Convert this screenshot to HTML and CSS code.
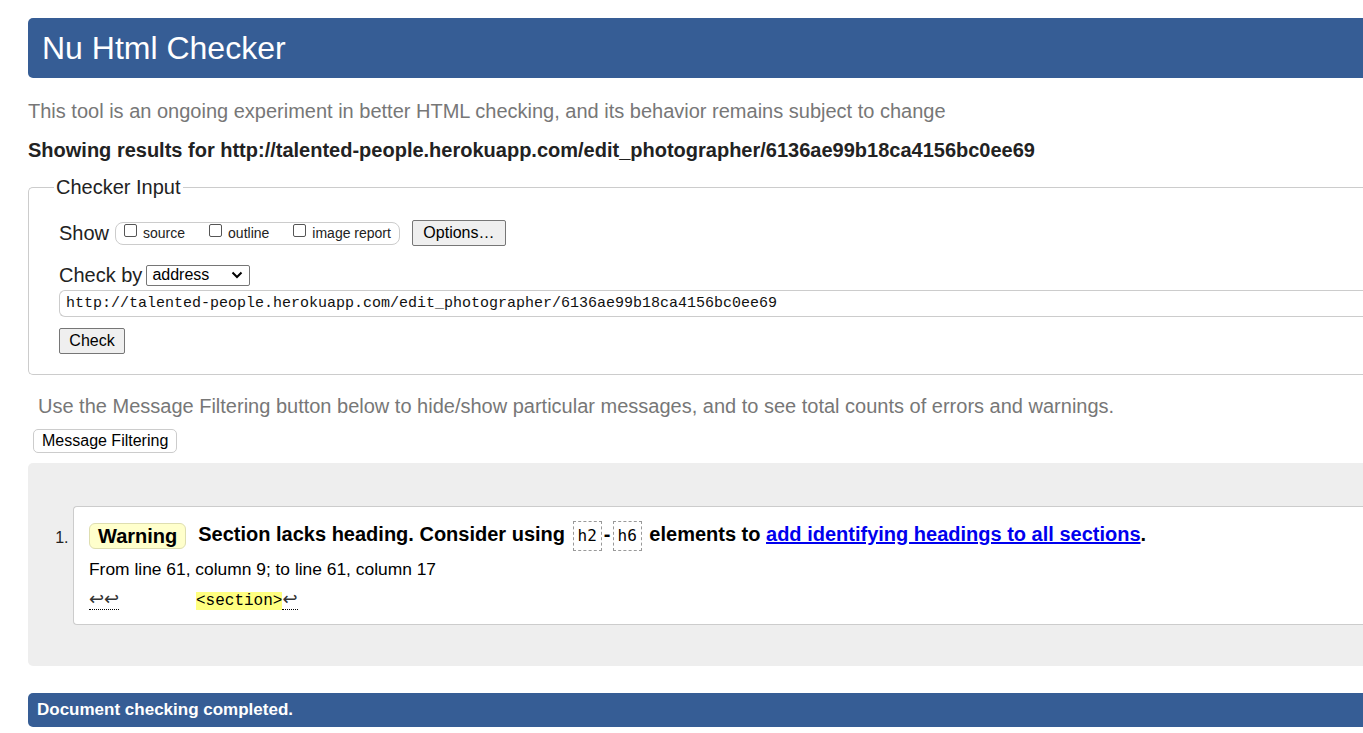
FILE: index.html
```html
<!DOCTYPE html>
<html lang="en">
<head>
<meta charset="utf-8">
<title>Nu Html Checker</title>
<link rel="stylesheet" href="styles.css">
</head>
<body>
<div class="page">
  <h1 class="banner">Nu Html Checker</h1>
  <p class="intro">This tool is an ongoing experiment in better HTML checking, and its behavior remains subject to change</p>
  <h2 class="results">Showing results for http://talented-people.herokuapp.com/edit_photographer/6136ae99b18ca4156bc0ee69</h2>
  <fieldset class="input">
    <legend>Checker Input</legend>
    <div class="row show-row">
      <span class="label">Show</span>
      <span class="show-group">
        <label class="opt"><span class="cb"></span>source</label>
        <label class="opt"><span class="cb"></span>outline</label>
        <label class="opt"><span class="cb"></span>image report</label>
      </span>
      <span class="btn btn-options">Options…</span>
    </div>
    <div class="row by-row">
      <span class="label">Check by</span>
      <span class="select">address<svg class="chev" width="12" height="8" viewBox="0 0 12 8"><path d="M1.5 1.5 L6 6 L10.5 1.5" fill="none" stroke="#000" stroke-width="2"/></svg></span>
    </div>
    <div class="url">http://talented-people.herokuapp.com/edit_photographer/6136ae99b18ca4156bc0ee69</div>
    <span class="btn btn-check">Check</span>
  </fieldset>
  <p class="filter-note">Use the Message Filtering button below to hide/show particular messages, and to see total counts of errors and warnings.</p>
  <span class="btn-filter">Message Filtering</span>
  <div class="messages">
    <ol class="list">
      <li class="item">
        <p class="msg"><span class="badge">Warning</span><span class="msg-text">Section lacks heading. Consider using <code class="tag">h2</code>-<code class="tag">h6</code> elements to <a href="#">add identifying headings to all sections</a>.</span></p>
        <p class="loc">From line 61, column 9; to line 61, column 17</p>
        <p class="extract"><span class="lf">↩↩</span>        <b class="hl">&lt;section&gt;</b><span class="lf">↩</span></p>
      </li>
    </ol>
  </div>
  <p class="done">Document checking completed.</p>
</div>
</body>
</html>
```

FILE: styles.css
```css
html {
  overflow: hidden;
}
body {
  margin: 0;
  background: #fff;
  font-family: "Liberation Sans", Arial, sans-serif;
  color: #000;
}
.page {
  margin-left: 28px;
  width: 1400px;
  padding-top: 18px;
}
.banner {
  margin: 0;
  height: 60px;
  line-height: 60px;
  padding-left: 14px;
  background: #365d95;
  color: #fff;
  font-size: 32px;
  font-weight: normal;
  border-radius: 5px 0 0 5px;
}
.intro {
  margin: 21px 0 0;
  font-size: 20px;
  line-height: 24px;
  color: #777;
}
.results {
  margin: 15px 0 0;
  font-size: 20px;
  line-height: 24px;
  color: #222;
}
.input {
  margin: 13px 0 0;
  padding: 0 0 20px 30px;
  border: 1px solid #ccc;
  border-right: none;
  border-radius: 5px 0 0 5px;
}
.input legend {
  margin-left: -5px;
  padding: 0 2px;
  font-size: 20px;
  line-height: 24px;
  color: #222;
}
.row {
  display: flex;
  align-items: center;
}
.show-row {
  margin-top: 20px;
  height: 28px;
}
.label {
  font-size: 20px;
  color: #222;
}
.show-group {
  display: flex;
  align-items: center;
  margin-left: 6px;
  height: 21px;
  padding: 0 8px 0 8px;
  border: 1px solid #ccc;
  border-radius: 8px;
  gap: 24px;
}
.opt {
  display: flex;
  align-items: center;
  font-size: 14px;
  color: #222;
}
.opt .cb {
  width: 11px;
  height: 11px;
  border: 1px solid #555;
  border-radius: 2px;
  margin-right: 6px;
  position: relative;
  top: -3px;
}
.btn {
  display: inline-flex;
  align-items: center;
  justify-content: center;
  height: 24px;
  padding: 0 10px;
  background: #efefef;
  border: 1px solid #767676;
  border-radius: 2px;
  font-size: 16px;
  color: #000;
}
.btn-options {
  margin-left: 12px;
  width: 72px;
}
.by-row {
  margin-top: 17px;
  height: 22px;
}
.select {
  display: inline-flex;
  align-items: center;
  justify-content: space-between;
  margin-left: 4px;
  width: 92px;
  height: 19px;
  padding: 0 5px;
  border: 1px solid #767676;
  border-radius: 2px;
  font-size: 16px;
  color: #000;
}
.chev {
  margin-right: 1px;
}
.url {
  margin-top: 4px;
  height: 25px;
  line-height: 25px;
  padding-left: 6px;
  border: 1px solid #ccc;
  border-right: none;
  border-radius: 6px 0 0 6px;
  font-family: "Liberation Mono", "DejaVu Sans Mono", monospace;
  font-size: 15px;
  color: #111;
}
.btn-check {
  margin-top: 11px;
  width: 44px;
}
.filter-note {
  margin: 19px 0 0;
  padding-left: 10px;
  font-size: 20px;
  line-height: 24px;
  color: #777;
}
.btn-filter {
  display: inline-flex;
  align-items: center;
  margin: 11px 0 0 5px;
  height: 22px;
  padding: 0 8px;
  border: 1px solid #ccc;
  border-radius: 5px;
  font-size: 16px;
  color: #000;
  background: #fff;
}
.messages {
  margin-top: 10px;
  height: 203px;
  padding-top: 43px;
  box-sizing: border-box;
  background: #eee;
  border-radius: 5px 0 0 5px;
}
.list {
  margin: 0;
  padding-left: 45px;
  font-size: 16px;
}
.item {
  height: 119px;
  box-sizing: border-box;
  padding: 15px 15px 0;
  background: #fff;
  border: 1px solid #ccc;
  border-right: none;
  border-radius: 4px 0 0 4px;
  color: #222;
}
.item::marker {
  font-size: 16px;
}
.msg {
  margin: 0;
  display: flex;
  align-items: center;
  height: 28px;
}
.badge {
  display: inline-flex;
  align-items: center;
  height: 24px;
  padding: 0 8px;
  background: #ffffcc;
  border: 1px solid #dedeb0;
  border-radius: 6px;
  font-size: 20px;
  font-weight: bold;
  color: #000;
}
.msg-text {
  margin-left: 12px;
  font-size: 20px;
  font-weight: bold;
  color: #000;
}
.tag {
  display: inline-block;
  padding: 3px 4px;
  border: 1px dashed #999;
  font-family: "DejaVu Sans Mono", "Liberation Mono", monospace;
  font-size: 16px;
  font-weight: normal;
  margin: 0 2px;
  line-height: 22px;
}
.msg-text a {
  color: #0000ee;
  text-decoration: underline;
}
.loc {
  margin: 8px 0 0;
  font-size: 17.4px;
  line-height: 22px;
  color: #000;
}
.extract {
  margin: 9px 0 0;
  white-space: pre;
  font-family: "Liberation Mono", "DejaVu Sans Mono", monospace;
  font-size: 16px;
  line-height: 22px;
  color: #000;
}
.lf {
  font-family: "DejaVu Sans", sans-serif;
  font-size: 18px;
  line-height: 20px;
  border-bottom: 1px dotted #000;
  color: #333;
}
.hl {
  font-weight: normal;
  background: #ffff80;
}
.done {
  margin: 27px 0 0;
  height: 34px;
  line-height: 34px;
  padding-left: 9px;
  background: #365d95;
  color: #fff;
  font-size: 17px;
  font-weight: bold;
  border-radius: 5px 0 0 5px;
}
```
